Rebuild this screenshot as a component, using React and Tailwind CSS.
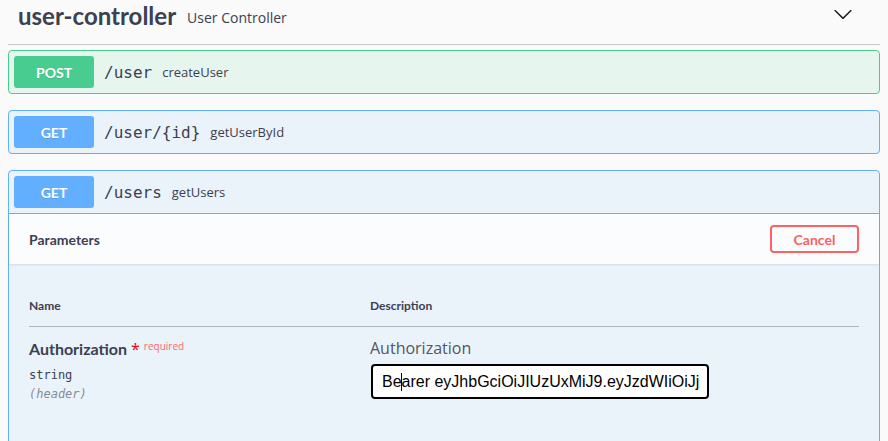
import React from 'react';

const sans = { fontFamily: '"Open Sans", sans-serif' };

function Chevron() {
  return (
    <svg width="20" height="20" viewBox="0 0 20 20" className="fill-[#1b1b1b]">
      <path d="M17.418 6.109c.272-.268.709-.268.979 0s.271.701 0 .969l-7.908 7.83c-.27.268-.707.268-.979 0l-7.908-7.83c-.27-.268-.27-.701 0-.969.271-.268.709-.268.979 0L10 13.25l7.418-7.141z" />
    </svg>
  );
}

function Summary({ method, path, desc, badge, border }) {
  return (
    <div className={`flex items-center p-[5px] ${border}`}>
      <div className={`w-[80px] h-[32px] rounded-[3px] flex items-center justify-center text-white font-bold text-[14px] font-['Lato',sans-serif] [text-shadow:0_1px_0_rgba(0,0,0,0.1)] ${badge}`}>
        {method}
      </div>
      <span className="mt-[2px] px-[10px] text-[16px] text-[#3b4151] font-['DejaVu_Sans_Mono',monospace]">{path}</span>
      <span className="mt-[2px] text-[13px] text-[#3b4151]" style={sans}>{desc}</span>
    </div>
  );
}

export default function App() {
  return (
    <div className="min-h-screen bg-[#fafafa] px-[8px] text-[#3b4151]">
      {/* Tag header */}
      <div className="h-[45px] border-b border-[#c8c9cc] flex items-start justify-between pl-[10px]">
        <div className="flex items-center h-[32px]">
          <span className="text-[24px] leading-[32px] font-bold font-['Lato',sans-serif]">user-controller</span>
          <span className="ml-[11px] text-[14px] mt-[2px]" style={sans}>User Controller</span>
        </div>
        <div className="mt-[4px] mr-[27px]">
          <Chevron />
        </div>
      </div>

      <div className="mt-[5px] flex flex-col gap-[16px]">
        <div className="rounded-[4px] border border-[#49cc90] bg-[#49cc90]/10">
          <Summary method="POST" path="/user" desc="createUser" badge="bg-[#49cc90]" border="" />
        </div>

        <div className="rounded-[4px] border border-[#61affe] bg-[#61affe]/10">
          <Summary method="GET" path="/user/{id}" desc="getUserById" badge="bg-[#61affe]" border="" />
        </div>

        <div className="rounded-t-[4px] border border-[#61affe] bg-[#61affe]/10 min-h-[300px]">
          <Summary method="GET" path="/users" desc="getUsers" badge="bg-[#61affe]" border="border-b border-[#61affe]" />

          {/* Parameters header */}
          <div className="min-h-[50px] px-[20px] flex items-center justify-between bg-white/80 shadow-[0_1px_2px_rgba(0,0,0,0.1)]">
            <span className="mt-[1px] text-[14px] font-bold font-['Lato',sans-serif]">Parameters</span>
            <button className="w-[89px] h-[28px] border-2 border-[#ff6060] rounded-[4px] text-[#ff6060] text-[14px] font-bold font-['Lato',sans-serif] bg-transparent">
              Cancel
            </button>
          </div>

          {/* Parameters table */}
          <div className="px-[20px] pt-[22px] pb-[20px]">
            <div className="flex py-[12px] border-b border-[#aeb2b9] text-[12px] leading-[16px] font-bold font-['Lato',sans-serif]">
              <div className="w-[341px]">Name</div>
              <div>Description</div>
            </div>
            <div className="flex pt-[10px]">
              <div className="w-[341px] flex flex-col">
                <div className="flex items-start leading-[24px]">
                  <span className="text-[16px] font-bold font-['Lato',sans-serif]">Authorization</span>
                  <span className="ml-[4px] text-red-600 text-[16px] leading-[24px]" style={sans}>*</span>
                  <span className="ml-[4px] text-[10px] leading-[14px] text-[#ff0000]/60 mt-[2px]" style={sans}>required</span>
                </div>
                <div className="mt-[6px] text-[12px] leading-[16px] font-['DejaVu_Sans_Mono',monospace]">string</div>
                <div className="mt-[3px] text-[12px] leading-[16px] italic text-[#3b4151]/60 font-['DejaVu_Sans_Mono',monospace]">(header)</div>
              </div>
              <div className="flex flex-col -mt-[1px]">
                <div className="text-[16px] leading-[24px] text-[#3b4151]/90" style={sans}>Authorization</div>
                <div className="relative mt-[4px] ml-[1px]">
                  <input
                    readOnly
                    value="Bearer eyJhbGciOiJIUzUxMiJ9.eyJzdWIiOiJj"
                    className="w-[338px] h-[35px] border-2 border-black rounded-[4px] pl-[9px] pr-[8px] bg-white text-black text-[16px] font-['Liberation_Sans',Arial,sans-serif] outline-none"
                  />
                  <span className="absolute left-[30px] top-[9px] h-[18px] w-px bg-black" />
                </div>
              </div>
            </div>
          </div>
        </div>
      </div>
    </div>
  );
}
